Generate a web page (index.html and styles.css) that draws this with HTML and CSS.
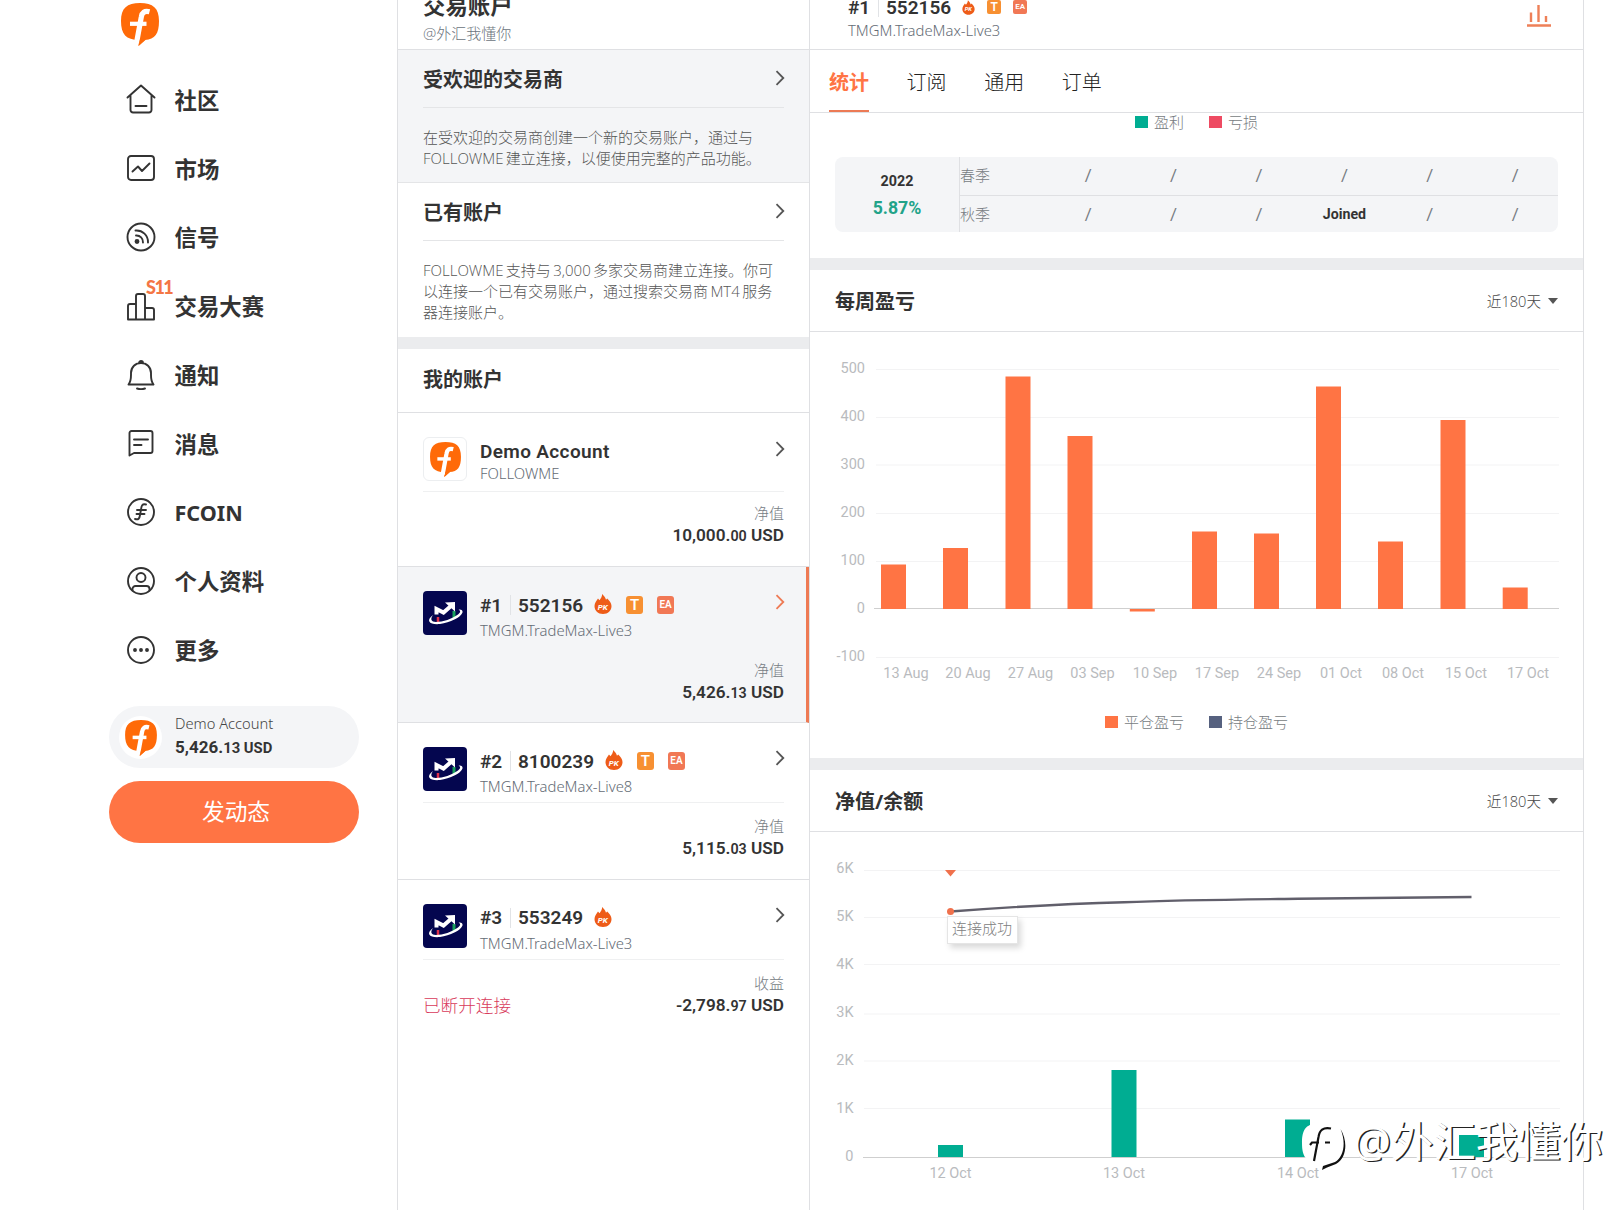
FILE: index.html
```html
<!DOCTYPE html>
<html lang="zh-CN">
<head>
    <meta charset="UTF-8">
    <meta name="viewport" content="width=device-width, initial-scale=1.0">
    <title>交易账户 - FOLLOWME</title>
    <link rel="stylesheet" href="styles.css">
</head>
<body>
    <!-- Shared icons -->
    <svg class="sprite" aria-hidden="true">
        <symbol id="logo" viewBox="0 0 38 43">
            <path d="M19 0C32 0 38 5 38 18C38 31 34 36 24 37L17.500 43L18 37C5 37 0 31 0 18C0 5 6 0 19 0Z" fill="#ff6a08"/>
            <path d="M28.500 8.800C23.500 7.500 21 9.500 20.300 14L15.500 40" fill="none" stroke="#fff" stroke-width="5.200"/>
            <path d="M9 20.800H25.500" stroke="#fff" stroke-width="4.200"/>
            <path d="M19 36.500L17.500 43L25 36.500Z" fill="#ff6a08"/>
        </symbol>
        <symbol id="chevron" viewBox="0 0 10 16">
            <path d="M1.500 1.200L8.300 8L1.500 14.800" fill="none" stroke="currentColor" stroke-width="1.800"/>
        </symbol>
        <symbol id="broker" viewBox="0 0 44 44">
            <rect width="44" height="44" rx="4" fill="#04064f"/>
            <path d="M15 26v5" stroke="#e0314b" stroke-width="2.500"/>
            <path d="M31 20v8" stroke="#17a05c" stroke-width="3"/>
            <path d="M10 24C2 30 7 34 17 33C27 31.500 38 26.500 39.500 21.500C40 19 38 18 35.500 18.500C38 20 37.500 21.500 35 23.500C29 28 20 31 13 31C8 31 7 28 10 24Z" fill="#fff"/>
            <path d="M13.500 23.500V18L20.500 21.500L28 15" fill="none" stroke="#fff" stroke-width="4"/>
            <path d="M22 11.500L32 11L32 20.500Z" fill="#fff"/>
        </symbol>
        <symbol id="pk" viewBox="0 0 18 20">
            <path d="M8.200 0C10 2 11.500 3.500 12 5.800L13.200 4.500C15.500 7 17.500 9 17.500 12C17.500 16.500 14 20 9 20S.5 16.500 .5 12C.5 9 2.500 7 4 4.500L5.500 6.200C7 4.500 8 2.500 8.200 0Z" fill="#ee5c18"/>
            <text x="8.800" y="15.500" text-anchor="middle" class="pk-text">PK</text>
        </symbol>
    </svg>

    <div class="page">
        <!-- Navigation -->
        <div class="sidebar">
            <svg class="logo"><use href="#logo"/></svg>
            <div class="nav">
                <div class="nav-item">
                    <svg viewBox="0 0 30 30"><path d="M1.500 13.500L15 1.500L28.500 13.500M4.500 11.500V26a2.500 2.500 0 0 0 2.500 2.500H23a2.500 2.500 0 0 0 2.500-2.500V11.500M9.500 22H20.500"/></svg>
                    <span>社区</span>
                </div>
                <div class="nav-item">
                    <svg viewBox="0 0 30 30"><rect x="2" y="3" width="26" height="24" rx="3"/><path d="M6.500 18.500L12 13.500L16 18L23.500 10.500"/></svg>
                    <span>市场</span>
                </div>
                <div class="nav-item">
                    <svg viewBox="0 0 30 30"><circle cx="15" cy="15" r="13.500"/><path d="M9.500 8.500A11.500 11.500 0 0 1 22 20.500M10 13.500A6.500 6.500 0 0 1 17 20.500"/><circle cx="11" cy="19.500" r="1.500" class="dot"/></svg>
                    <span>信号</span>
                </div>
                <div class="nav-item">
                    <svg viewBox="0 0 30 30"><path d="M2 28.500V15a2 2 0 0 1 2-2H10V5a2 2 0 0 1 2-2H17a2 2 0 0 1 2 2V28.500ZM10 13V28.500M19 17H26a2 2 0 0 1 2 2V28.500H19"/></svg>
                    <span>交易大赛</span>
                    <b class="season">S11</b>
                </div>
                <div class="nav-item">
                    <svg viewBox="0 0 30 30"><path d="M2.500 24.500C4.500 22 5 19 5 15V13C5 7 9.500 3 15 3S25 7 25 13V15C25 19 25.500 22 27.500 24.500ZM13 3A2 2 0 0 1 17 3M11 28.500Q15 30 19 28.500"/></svg>
                    <span>通知</span>
                </div>
                <div class="nav-item">
                    <svg viewBox="0 0 30 30"><path d="M3.500 27.500V5a2 2 0 0 1 2-2H24.500a2 2 0 0 1 2 2V23a2 2 0 0 1-2 2H8ZM8 11.500H22M8 17H15.500"/></svg>
                    <span>消息</span>
                </div>
                <div class="nav-item">
                    <svg viewBox="0 0 30 30"><circle cx="15" cy="15" r="13"/><path d="M20 7.500C16 6.500 15.500 9 15 12.500L14 18C13.500 21.500 12.500 23 9 22M11 13H20M10.500 17H18.500"/></svg>
                    <span class="latin">FCOIN</span>
                </div>
                <div class="nav-item">
                    <svg viewBox="0 0 30 30"><circle cx="15" cy="15" r="13"/><circle cx="15" cy="11.500" r="4.500"/><path d="M6.500 24.500V23a3 3 0 0 1 3-3H20.500a3 3 0 0 1 3 3V24.500"/></svg>
                    <span>个人资料</span>
                </div>
                <div class="nav-item">
                    <svg viewBox="0 0 30 30"><circle cx="15" cy="15" r="13"/><g class="dot"><circle cx="9" cy="15" r="1"/><circle cx="15" cy="15" r="1"/><circle cx="21" cy="15" r="1"/></g></svg>
                    <span>更多</span>
                </div>
            </div>
            <div class="account-pill">
                <div class="avatar"><svg><use href="#logo"/></svg></div>
                <div>
                    <div class="pill-name">Demo Account</div>
                    <div class="pill-amount">5,426.<small>13 USD</small></div>
                </div>
            </div>
            <div class="post-button">发动态</div>
        </div>

        <!-- Trading accounts -->
        <div class="accounts">
            <div class="accounts-header">
                <h1>交易账户</h1>
                <p>@外汇我懂你</p>
            </div>
            <div class="intro active">
                <div class="intro-title"><h2>受欢迎的交易商</h2><svg class="chevron"><use href="#chevron"/></svg></div>
                <p>在受欢迎的交易商创建一个新的交易账户，通过与<br>FOLLOWME 建立连接，以便使用完整的产品功能。</p>
            </div>
            <div class="intro">
                <div class="intro-title"><h2>已有账户</h2><svg class="chevron"><use href="#chevron"/></svg></div>
                <p>FOLLOWME 支持与 3,000 多家交易商建立连接。你可<br>以连接一个已有交易账户，通过搜索交易商 MT4 服务<br>器连接账户。</p>
            </div>
            <div class="band"></div>
            <h2 class="list-title">我的账户</h2>

            <div class="account demo">
                <div class="account-top">
                    <div class="account-icon"><svg><use href="#logo"/></svg></div>
                    <div class="account-info">
                        <div class="account-name"><span class="demo-name">Demo Account</span></div>
                        <div class="account-server">FOLLOWME</div>
                    </div>
                    <svg class="chevron"><use href="#chevron"/></svg>
                </div>
                <div class="account-bottom">
                    <div class="value"><div class="value-label">净值</div><div class="amount">10,000.<small>00</small> USD</div></div>
                </div>
            </div>
            <div class="account selected">
                <div class="account-top">
                    <svg class="account-icon"><use href="#broker"/></svg>
                    <div class="account-info">
                        <div class="account-name"><span class="rank">#1</span><span>552156</span><svg class="pk"><use href="#pk"/></svg><i class="tag t">T</i><i class="tag ea">EA</i></div>
                        <div class="account-server">TMGM.TradeMax-Live3</div>
                    </div>
                    <svg class="chevron"><use href="#chevron"/></svg>
                </div>
                <div class="account-bottom">
                    <div class="value"><div class="value-label">净值</div><div class="amount">5,426.<small>13</small> USD</div></div>
                </div>
            </div>
            <div class="account">
                <div class="account-top">
                    <svg class="account-icon"><use href="#broker"/></svg>
                    <div class="account-info">
                        <div class="account-name"><span class="rank">#2</span><span>8100239</span><svg class="pk"><use href="#pk"/></svg><i class="tag t">T</i><i class="tag ea">EA</i></div>
                        <div class="account-server">TMGM.TradeMax-Live8</div>
                    </div>
                    <svg class="chevron"><use href="#chevron"/></svg>
                </div>
                <div class="account-bottom">
                    <div class="value"><div class="value-label">净值</div><div class="amount">5,115.<small>03</small> USD</div></div>
                </div>
            </div>
            <div class="account last">
                <div class="account-top">
                    <svg class="account-icon"><use href="#broker"/></svg>
                    <div class="account-info">
                        <div class="account-name"><span class="rank">#3</span><span>553249</span><svg class="pk"><use href="#pk"/></svg></div>
                        <div class="account-server">TMGM.TradeMax-Live3</div>
                    </div>
                    <svg class="chevron"><use href="#chevron"/></svg>
                </div>
                <div class="account-bottom">
                    <div class="disconnected">已断开连接</div>
                    <div class="value"><div class="value-label">收益</div><div class="amount">-2,798.<small>97</small> USD</div></div>
                </div>
            </div>
        </div>

        <!-- Account detail -->
        <div class="detail">
            <div class="detail-header">
                <div class="account-info">
                    <div class="account-name"><span class="rank">#1</span><span>552156</span><svg class="pk"><use href="#pk"/></svg><i class="tag t">T</i><i class="tag ea">EA</i></div>
                    <div class="account-server">TMGM.TradeMax-Live3</div>
                </div>
                <svg class="stats-icon" viewBox="0 0 26 24"><path d="M5 8.500V18M12.500 1V18M20 12V18M1 21.500H25"/></svg>
            </div>
            <div class="tabs">
                <div class="tab current">统计</div>
                <div class="tab">订阅</div>
                <div class="tab">通用</div>
                <div class="tab">订单</div>
            </div>
            <div class="legend top-legend">
                <span><i class="green"></i>盈利</span>
                <span><i class="red"></i>亏损</span>
            </div>
            <div class="season-table">
                <div class="year"><b>2022</b><strong>5.87%</strong></div>
                <div class="season-row"><span>春季</span><i>/</i><i>/</i><i>/</i><i>/</i><i>/</i><i>/</i></div>
                <div class="season-row"><span>秋季</span><i>/</i><i>/</i><i>/</i><b>Joined</b><i>/</i><i>/</i></div>
            </div>
            <div class="band"></div>

            <div class="section-title"><h2>每周盈亏</h2><div class="range">近180天<i></i></div></div>
            <svg class="chart weekly" viewBox="810 332 773 373">
                <path class="grid" d="M876 369.500H1559M876 417.500H1559M876 465H1559M876 513.500H1559M876 561.500H1559M876 657.500H1559"/>
                <g class="y-axis">
                    <text x="865" y="373">500</text>
                    <text x="865" y="421">400</text>
                    <text x="865" y="469">300</text>
                    <text x="865" y="517">200</text>
                    <text x="865" y="565">100</text>
                    <text x="865" y="613">0</text>
                    <text x="865" y="661">-100</text>
                </g>
                <path class="axis" d="M874 608.500H1559"/>
                <g class="bars">
                    <rect x="881" y="564.500" width="25" height="44.500"/>
                    <rect x="943" y="548" width="25" height="61"/>
                    <rect x="1005.500" y="376.500" width="25" height="232.500"/>
                    <rect x="1067.500" y="436" width="25" height="173"/>
                    <rect x="1129.800" y="609" width="25" height="2.500"/>
                    <rect x="1192" y="531.500" width="25" height="77.500"/>
                    <rect x="1254" y="533.500" width="25" height="75.500"/>
                    <rect x="1316" y="386.500" width="25" height="222.500"/>
                    <rect x="1378" y="541.500" width="25" height="67.500"/>
                    <rect x="1440.500" y="420" width="25" height="189"/>
                    <rect x="1502.700" y="587.500" width="25" height="21.500"/>
                </g>
                <g class="x-axis">
                    <text x="906" y="678">13 Aug</text>
                    <text x="968" y="678">20 Aug</text>
                    <text x="1030.500" y="678">27 Aug</text>
                    <text x="1092.500" y="678">03 Sep</text>
                    <text x="1155" y="678">10 Sep</text>
                    <text x="1217" y="678">17 Sep</text>
                    <text x="1279" y="678">24 Sep</text>
                    <text x="1341" y="678">01 Oct</text>
                    <text x="1403" y="678">08 Oct</text>
                    <text x="1466" y="678">15 Oct</text>
                    <text x="1528" y="678">17 Oct</text>
                </g>
            </svg>
            <div class="legend weekly-legend">
                <span><i class="orange"></i>平仓盈亏</span>
                <span><i class="navy"></i>持仓盈亏</span>
            </div>
            <div class="band"></div>

            <div class="section-title"><h2>净值/余额</h2><div class="range">近180天<i></i></div></div>
            <div class="balance">
                <svg class="chart" viewBox="810 832 773 378">
                    <path class="grid" d="M864 870.500H1560M864 917.500H1560M864 964.500H1560M864 1014H1560M864 1061H1560M864 1108.500H1560"/>
                    <g class="y-axis">
                        <text x="853.500" y="873">6K</text>
                        <text x="853.500" y="921">5K</text>
                        <text x="853.500" y="969">4K</text>
                        <text x="853.500" y="1017">3K</text>
                        <text x="853.500" y="1065">2K</text>
                        <text x="853.500" y="1113">1K</text>
                        <text x="853.500" y="1161">0</text>
                    </g>
                    <path class="axis" d="M863 1157.500H1557"/>
                    <g class="bars profit">
                        <rect x="938" y="1145" width="25" height="12"/>
                        <rect x="1111.500" y="1070" width="25" height="87"/>
                        <rect x="1285" y="1119.500" width="25" height="37.500"/>
                        <rect x="1459" y="1135" width="25" height="22"/>
                    </g>
                    <path class="line" d="M950.500 911.500C1010 907 1070 903.500 1124 902.200C1180 900 1240 899.500 1298 898.800L1471.500 897"/>
                    <circle cx="950.500" cy="911.500" r="3.500" class="marker"/>
                    <path d="M945 870H956L950.500 876.500Z" class="marker"/>
                    <g class="x-axis">
                        <text x="950.500" y="1178">12 Oct</text>
                        <text x="1124" y="1178">13 Oct</text>
                        <text x="1298" y="1178">14 Oct</text>
                        <text x="1472" y="1178">17 Oct</text>
                    </g>
                </svg>
                <div class="tooltip">连接成功</div>
            </div>
        </div>
    </div>

    <!-- Author watermark -->
    <div class="watermark">
        <svg viewBox="0 0 46 50">
            <path d="M22 2C38 2 43 8 43 22C43 36 39 42 31 43L21 48L22 42C6 42 2 36 2 22C2 8 6 2 22 2Z" fill="#fff"/>
            <path d="M40.500 8C46.500 22 43.500 36 35 41L23 45L22 49L27 46.500L36 43C47 37 48 20 40.500 8Z" fill="#111"/>
            <path d="M31 7.500C23 6 19.500 9 18.500 16L14 40M10 24L12 21.500H19M25 21.500H30" fill="none" stroke="#111" stroke-width="2.200"/>
        </svg>
        <span>@外汇我懂你</span>
    </div>
</body>
</html>
```
FILE: styles.css
```css
* {
    box-sizing: border-box;
    margin: 0;
    padding: 0;
}

body {
    width: 1623px;
    height: 1210px;
    overflow: hidden;
    position: relative;
    background: #fff;
    color: #333;
    font-family: "Open Sans", "Noto Sans CJK SC", sans-serif;
}

i {
    font-style: normal;
}

.sprite {
    display: none;
}

.page {
    display: flex;
    height: 1210px;
}

/* Sidebar */
.sidebar {
    width: 397px;
    padding: 3px 38px 0 109px;
}

.logo {
    display: block;
    width: 38px;
    height: 43px;
    margin-left: 12px;
}

.nav {
    padding-top: 19px;
}

.nav-item {
    display: flex;
    align-items: center;
    position: relative;
    height: 68.8px;
    padding-left: 16.5px;
    font-family: "Noto Sans", "Noto Sans CJK SC", sans-serif;
    font-size: 22.4px;
    font-weight: 700;
}

.nav-item svg {
    width: 30px;
    height: 30px;
    margin-right: 19px;
    fill: none;
    stroke: #333;
    stroke-width: 1.9;
    stroke-linejoin: round;
    stroke-linecap: round;
}

.nav-item .dot {
    fill: #333;
}

.nav-item .latin {
    font-size: 21.6px;
}

.season {
    position: absolute;
    left: 37px;
    top: 5px;
    font-family: Lato, sans-serif;
    font-weight: 900;
    font-size: 18px;
    letter-spacing: -1.5px;
    line-height: 22px;
    color: #f47645;
}

.account-pill {
    display: flex;
    align-items: center;
    height: 62px;
    margin-top: 22px;
    padding-left: 10px;
    border-radius: 31px;
    background: #f4f5f7;
}

.avatar {
    display: flex;
    align-items: center;
    justify-content: center;
    width: 43px;
    height: 43px;
    margin-right: 13px;
    border-radius: 50%;
    background: #fff;
}

.avatar svg {
    width: 32px;
    height: 36px;
    margin-top: 2px;
}

.pill-name {
    margin-top: -2px;
    font-family: "Noto Sans", sans-serif;
    font-size: 14.7px;
    font-weight: 300;
    line-height: 23px;
    color: #444;
}

.pill-amount {
    font-family: Roboto, sans-serif;
    font-size: 17px;
    font-weight: 700;
    line-height: 24px;
}

.pill-amount small {
    font-size: 14.8px;
}

.post-button {
    height: 62px;
    margin-top: 13px;
    padding-left: 4px;
    border-radius: 31px;
    background: #ff7444;
    color: #fff;
    font-size: 22.7px;
    line-height: 61px;
    text-align: center;
}

/* Accounts column */
.accounts {
    width: 413px;
    border-left: 1px solid #dfe0e3;
    border-right: 1px solid #dfe0e3;
}

.accounts-header {
    display: flex;
    flex-direction: column;
    justify-content: flex-end;
    height: 50px;
    padding: 0 0 5px 25px;
    border-bottom: 1px solid #dfe0e3;
}

.accounts-header h1 {
    font-size: 22.4px;
    line-height: 32px;
}

.accounts-header p {
    font-size: 15px;
    font-weight: 300;
    line-height: 22px;
    color: #6b737c;
}

.intro {
    height: 154px;
    padding: 0 25px;
    font-weight: 300;
}

.intro.active {
    height: 133px;
    background: #f4f5f7;
    border-bottom: 1px solid #e4e5e7;
}

.intro-title {
    display: flex;
    justify-content: space-between;
    align-items: center;
    height: 58px;
    border-bottom: 1px solid #e4e5e7;
}

h2 {
    font-size: 20px;
    font-weight: 700;
}

.chevron {
    width: 10px;
    height: 16px;
    margin-right: -1px;
    color: #555;
}

.intro-title .chevron {
    margin-top: -2px;
}

.intro p {
    padding-top: 19px;
    font-size: 15px;
    line-height: 21px;
    color: #555;
    word-spacing: -1.5px;
    white-space: nowrap;
}

.band {
    height: 12px;
    background: #ebecee;
}

.list-title {
    height: 64px;
    padding-left: 25px;
    border-bottom: 1px solid #dfe0e3;
    line-height: 62px;
}

.account {
    height: 156.5px;
    padding: 24px 25px 0;
    border-bottom: 1px solid #dfe0e3;
}

.account.last {
    border-bottom: 0;
}

.account.selected {
    height: 156px;
    background: #f4f5f7;
    padding-right: 22px;
    border-right: 3px solid #ee7a54;
}

.selected .chevron {
    color: #ee7a54;
}

.account-top {
    display: flex;
    height: 56px;
    border-bottom: 1px solid #eff0f1;
}

.selected .account-top {
    border-color: transparent;
}

.account-icon {
    width: 44px;
    height: 44px;
    margin-right: 13px;
}

.account-info {
    flex: 1;
}

.account-name {
    display: flex;
    align-items: center;
    height: 28px;
    font-family: Roboto, sans-serif;
    font-size: 19px;
    font-weight: 600;
}

.demo-name {
    letter-spacing: 0.35px;
}

.rank {
    width: 31px;
    margin-right: 7px;
    background: linear-gradient(#e1e3e6, #e1e3e6) right / 1px 20px no-repeat;
}

.pk {
    width: 18px;
    height: 20px;
    margin: -2px 14px 0 11px;
}

.pk-text {
    font: italic 700 8px Roboto, sans-serif;
    fill: #fff;
}

.tag {
    width: 17px;
    height: 18px;
    margin-right: 14px;
    border-radius: 3px;
    color: #fff;
    font-size: 15px;
    line-height: 18px;
    text-align: center;
}

.tag.t {
    background: #f79032;
}

.tag.ea {
    background: #f17855;
    font-size: 10px;
}

.account-server {
    font-family: "Noto Sans", sans-serif;
    font-size: 14.8px;
    font-weight: 300;
    line-height: 22px;
    color: #646c75;
}

.account-top .chevron {
    margin-top: 3px;
}

.account-bottom {
    display: flex;
    align-items: flex-end;
    padding-top: 13px;
}

.disconnected {
    font-size: 17.6px;
    font-weight: 300;
    line-height: 24px;
    color: #d83a5b;
}

.value {
    margin-left: auto;
    text-align: right;
}

.value-label {
    font-size: 15px;
    font-weight: 300;
    line-height: 21px;
    color: #777d84;
}

.amount {
    font-family: Roboto, sans-serif;
    font-size: 17.2px;
    font-weight: 600;
    line-height: 22px;
}

.amount small {
    font-size: 14.3px;
}

.demo {
    height: 154px;
}

.demo .account-top {
    height: 55px;
}

.demo .account-icon {
    display: flex;
    align-items: center;
    justify-content: center;
    border: 1px solid #eceef0;
    border-radius: 6px;
}

.demo .account-icon svg {
    width: 31px;
    height: 35px;
    margin-top: 1px;
}

.demo .account-server {
    margin-top: -3px;
}

.demo .chevron {
    margin-top: 4px;
}

.demo .account-bottom {
    padding-top: 11px;
}

/* Detail column */
.detail {
    width: 774px;
    border-right: 1px solid #dfe0e3;
}

.detail-header {
    display: flex;
    height: 50px;
    padding: 0 31px 0 38px;
    border-bottom: 1px solid #dfe0e3;
}

.detail-header .account-name {
    height: 21px;
    padding-bottom: 7px;
}

.detail-header .account-server {
    margin-top: -2px;
}

.detail-header .pk {
    width: 13px;
    height: 15px;
    margin: 0 12px 0 11px;
}

.detail-header .tag {
    width: 14px;
    height: 14px;
    margin-right: 12px;
    border-radius: 2px;
    font-size: 12px;
    line-height: 14px;
}

.detail-header .tag.ea {
    font-size: 8px;
}

.stats-icon {
    width: 26px;
    height: 24px;
    margin-top: 4px;
    fill: none;
    stroke: #ee8058;
    stroke-width: 2.4;
}

.tabs {
    display: flex;
    gap: 37.6px;
    height: 63px;
    padding-left: 19px;
    border-bottom: 1px solid #dfe0e3;
}

.tab {
    height: 62px;
    font-size: 20px;
    font-weight: 300;
    line-height: 65px;
    color: #222;
}

.tab.current {
    color: #ff7444;
    font-weight: 700;
    border-bottom: 2px solid #ec7a55;
}

.legend {
    display: flex;
    font-size: 15px;
    font-weight: 300;
    line-height: 20px;
    color: #777c82;
}

.legend span {
    display: flex;
    align-items: center;
    margin-right: 25px;
}

.legend i {
    width: 13px;
    height: 12px;
    margin-right: 6px;
}

.green {
    background: #00ad92;
}

.red {
    background: #ee4a62;
}

.orange {
    background: #ff7444;
}

.navy {
    background: #56617f;
}

.top-legend {
    height: 44px;
    align-items: flex-start;
    padding-left: 325px;
    margin-top: -1px;
}

.season-table {
    display: grid;
    grid-template-columns: 125px 1fr;
    grid-template-rows: 39px 36px;
    height: 75px;
    margin: 1px 25px 26px;
    border-radius: 8px;
    background: #f4f5f7;
}

.year {
    grid-row: 1 / 3;
    display: flex;
    flex-direction: column;
    align-items: center;
    border-right: 1px solid #dfe0e3;
    padding-top: 12px;
    font-family: Roboto, sans-serif;
}

.year b {
    font-size: 14.3px;
    line-height: 24px;
}

.year strong {
    margin-top: 3px;
    font-size: 17.7px;
    line-height: 24px;
    color: #22a389;
}

.season-row {
    display: grid;
    grid-template-columns: repeat(7, 1fr);
    align-items: center;
    text-align: center;
    font-size: 15px;
    font-weight: 300;
    line-height: 20px;
    color: #777c82;
}

.season-row:nth-child(2) {
    padding-bottom: 2px;
    border-bottom: 1px solid #dfe0e3;
}

.season-row span {
    text-align: left;
}

.season-row i {
    font-family: Roboto, sans-serif;
    font-size: 17px;
    font-weight: 400;
}

.season-row b {
    font-family: Roboto, sans-serif;
    font-size: 14.2px;
    font-weight: 700;
    color: #333;
}

.section-title {
    display: flex;
    justify-content: space-between;
    align-items: center;
    height: 62px;
    padding: 0 25px;
    border-bottom: 1px solid #dfe0e3;
}

.range {
    display: flex;
    align-items: center;
    font-size: 14.6px;
    font-weight: 300;
    color: #444;
}

.range i {
    margin-left: 7px;
    border: 5px solid transparent;
    border-top: 6px solid #555;
    border-bottom: 0;
}

/* Charts */
.chart {
    display: block;
    width: 773px;
    font-family: Roboto, sans-serif;
    font-size: 14.5px;
    font-weight: 400;
}

.weekly {
    height: 373px;
}

.grid {
    stroke: #f3f3f4;
    stroke-width: 1;
}

.axis {
    stroke: #cfcfcf;
    stroke-width: 1;
}

.y-axis,
.x-axis {
    fill: #b9bbbe;
}

.y-axis {
    text-anchor: end;
}

.x-axis {
    text-anchor: middle;
}

.bars {
    fill: #ff7444;
}

.bars.profit {
    fill: #00ad92;
}

.line {
    fill: none;
    stroke: #615f6b;
    stroke-width: 2.4;
}

.marker {
    fill: #f0714c;
}

.weekly-legend {
    height: 53px;
    padding: 7px 0 0 295px;
    align-items: flex-start;
}

.balance {
    position: relative;
}

.balance .chart {
    height: 378px;
}

.tooltip {
    position: absolute;
    left: 137px;
    top: 84px;
    width: 71px;
    height: 28px;
    padding-left: 4px;
    border: 1px solid #e5e5e5;
    background: #fff;
    box-shadow: 3px 4px 6px rgba(0, 0, 0, 0.15);
    color: #808080;
    font-size: 15px;
    font-weight: 300;
    line-height: 23px;
    white-space: nowrap;
}

/* Watermark over the chart */
.watermark {
    position: absolute;
    left: 1300px;
    top: 1117px;
    display: flex;
    color: #fff;
    font-size: 42.4px;
    font-weight: 400;
    line-height: 48px;
    text-shadow: 1.5px 1px 0.5px #222;
    white-space: nowrap;
}

.watermark svg {
    width: 46px;
    height: 50px;
    margin: 4px 7px 0 0;
}
```
